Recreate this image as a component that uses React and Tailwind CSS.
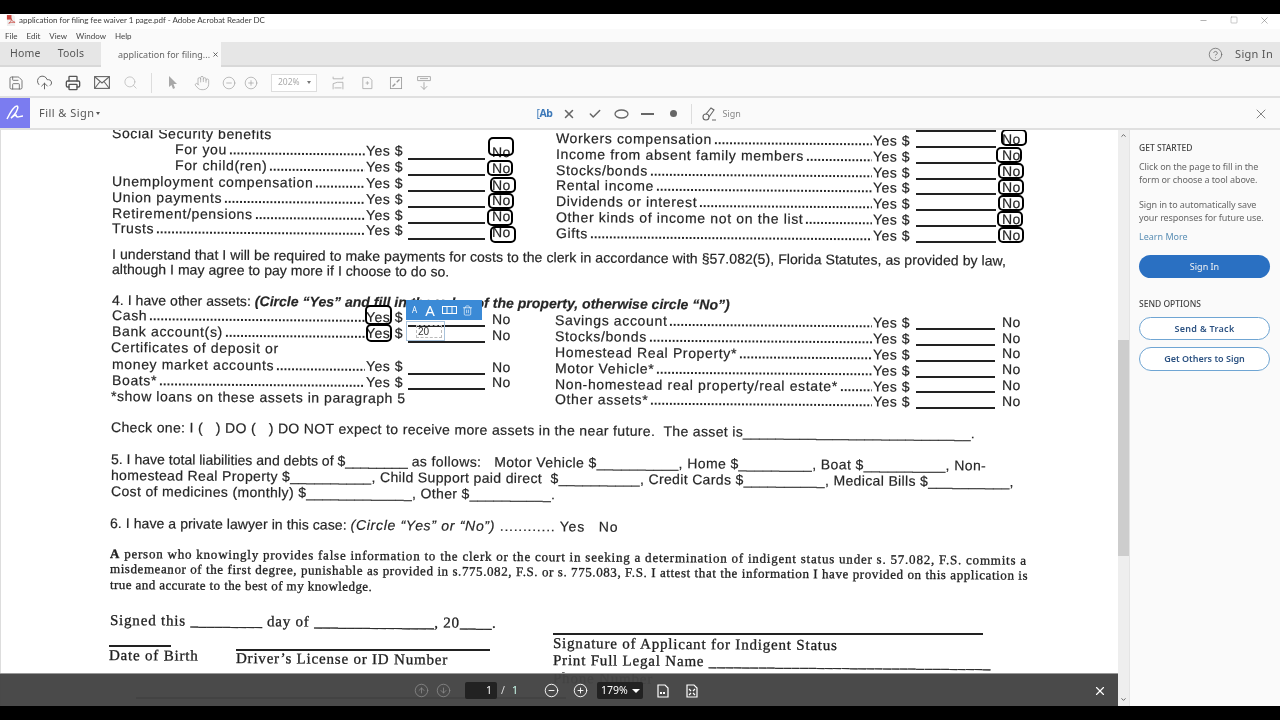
import React from "react";
import { Save, CloudUpload, Printer, Search, Hand, CircleMinus, CirclePlus, CircleHelp, ChevronUp, ChevronDown, X, Minus, Square, Check, Trash2, CircleArrowUp, CircleArrowDown } from "lucide-react";

const leftRows = [
  ["For you", 175, 141, 158, 152, 488, 137, 26, 19],
  ["For child(ren)", 175, 157, 174, 168, 487, 160, 26, 16],
  ["Unemployment compensation", 112, 173, 190, 185, 490, 177, 26, 16],
  ["Union payments", 112, 189, 206, 200, 488, 193, 26, 16],
  ["Retirement/pensions", 112, 205, 222, 216, 487, 209, 26, 17],
  ["Trusts", 112, 220, 238, 232, 490, 226, 26, 17],
];
const rightRows = [
  ["Workers compensation", 130, 146, 139, 1001, 129, 26, 17],
  ["Income from absent family members", 146, 162, 155, 996, 147, 26, 16],
  ["Stocks/bonds", 162, 178, 171, 998, 163, 26, 16],
  ["Rental income", 177, 193, 187, 998, 179, 26, 16],
  ["Dividends or interest", 193, 209, 203, 998, 195, 26, 16],
  ["Other kinds of income not on the list", 209, 225, 219, 997, 211, 26, 16],
  ["Gifts", 225, 241, 235, 998, 227, 26, 16],
];
const rightRows2 = [
  ["Savings account", 312, 328, 322],
  ["Stocks/bonds", 328, 344, 338],
  ["Homestead Real Property*", 344, 360, 353],
  ["Motor Vehicle*", 360, 376, 369],
  ["Non-homestead real property/real estate*", 376, 391, 385],
  ["Other assets*", 391, 407, 401],
];
const leftRows2 = [
  ["Cash", 307, 325, 319],
  ["Bank account(s)", 323, 341, 335],
  ["money market accounts", 356, 373, 367],
  ["Boats*", 372, 388, 382],
];

const T = ({ x, y, children, className = "" }) => (
  <div className={`absolute origin-left rotate-[0.42deg] whitespace-pre leading-[16px] ${className}`} style={{ left: x, top: y }}>{children}</div>
);

const Leader = ({ x, y, end, label }) => (
  <div className="absolute flex h-4 origin-left rotate-[0.42deg] items-center whitespace-nowrap leading-[16px]" style={{ left: x, top: y, width: end - x }}>
    <span className="tracking-[0.65px]">{label}</span>
    <div className="ml-[2px] mr-[1px] mt-[7px] h-[4px] min-w-0 flex-1 bg-[radial-gradient(circle,#222_0.8px,transparent_1.1px)] bg-[length:3.8px_4px]" />
    <span className="tracking-[0.5px]">Yes $</span>
  </div>
);

const Rule = ({ x, y, w }) => <div className="absolute h-[1.5px] bg-[#222]" style={{ left: x, top: y, width: w }} />;
const Mark = ({ x, y, w, h = 20 }) => <div className="absolute rounded-[5px] border-2 border-black" style={{ left: x, top: y, width: w, height: h }} />;

function Document() {
  return (
    <div className="relative h-full w-full overflow-hidden bg-white font-['Liberation_Sans',sans-serif] text-[14px] font-medium tracking-[0.35px] text-[#262626] shadow-[inset_1px_0_0_#ddd] blur-[0.2px] [-webkit-text-stroke:0.2px_#262626]">
      <T x={112} y={125} className="tracking-[0.6px]">Social Security benefits</T>
      {leftRows.map((r) => (
        <React.Fragment key={r[0]}>
          <Leader x={r[1]} y={r[2]} end={403} label={r[0]} />
          <Rule x={408} y={r[3]} w={77} />
          <T x={492} y={r[4] - 8}>No</T>
          <Mark x={r[5]} y={r[6]} w={r[7]} h={r[8]} />
        </React.Fragment>
      ))}
      {rightRows.map((r) => (
        <React.Fragment key={r[0]}>
          <Leader x={556} y={r[1]} end={910} label={r[0]} />
          <Rule x={916} y={r[2]} w={80} />
          <T x={1002} y={r[3] - 8}>No</T>
          <Mark x={r[4]} y={r[5]} w={r[6]} h={r[7]} />
        </React.Fragment>
      ))}
      <Rule x={916} y={130} w={80} />

      <T x={112} y={246} className="tracking-[0.08px]">I understand that I will be required to make payments for costs to the clerk in accordance with §57.082(5), Florida Statutes, as provided by law,</T>
      <T x={112} y={261} className="tracking-[0.05px]">although I may agree to pay more if I choose to do so.</T>

      <T x={112} y={292} className="tracking-[0.05px]">4. I have other assets: <b className="italic tracking-[0.03px]">(Circle “Yes” and fill in the value of the property, otherwise circle “No”)</b></T>
      {leftRows2.map((r) => (
        <React.Fragment key={r[0]}>
          <Leader x={112} y={r[1]} end={403} label={r[0]} />
          <Rule x={408} y={r[2]} w={77} />
          <T x={492} y={r[3] - 8}>No</T>
        </React.Fragment>
      ))}
      <T x={111} y={339} className="tracking-[0.65px]">Certificates of deposit or</T>
      <T x={111} y={388} className="tracking-[0.55px]">*show loans on these assets in paragraph 5</T>
      <Mark x={365} y={305} w={27} h={20} />
      <Mark x={366} y={324} w={26} h={18} />

      {rightRows2.map((r) => (
        <React.Fragment key={r[0]}>
          <Leader x={555} y={r[1]} end={910} label={r[0]} />
          <Rule x={916} y={r[2]} w={79} />
          <T x={1002} y={r[3] - 8}>No</T>
        </React.Fragment>
      ))}

      <T x={111} y={419}>Check one: I (   ) DO (   ) DO NOT expect to receive more assets in the near future.  The asset is____________________________.</T>
      <T x={111} y={451} className="tracking-[0.02px]">5. I have total liabilities and debts of $________ <span className="tracking-[0.4px]">as follows:   Motor Vehicle $__________, Home $_________, Boat $__________, Non-</span></T>
      <T x={111} y={467}>homestead Real Property $__________, Child Support paid direct  $__________, Credit Cards $__________, Medical Bills $__________,</T>
      <T x={111} y={483}>Cost of medicines (monthly) $_____________, Other $__________.</T>
      <T x={110} y={515} className="tracking-[0.08px]">6. I have a private lawyer in this case: <i className="tracking-[0.7px]">(Circle “Yes” or “No”)</i><span className="tracking-[0.75px]"> ............ Yes   No</span></T>

      <div className="font-['Liberation_Serif',serif] text-[13px] tracking-[0.58px] text-[#202020] [-webkit-text-stroke:0.3px_#202020]">
        <T x={110} y={546} className="rotate-[0.5deg] tracking-[0.78px]"><b>A</b> person who knowingly provides false information to the clerk or the court in seeking a determination of indigent status under s. 57.082, F.S. commits a</T>
        <T x={110} y={561} className="rotate-[0.5deg]">misdemeanor of the first degree, punishable as provided in s.775.082, F.S. or s. 775.083, F.S. I attest that the information I have provided on this application is</T>
        <T x={110} y={577} className="rotate-[0.5deg] tracking-[0.42px]">true and accurate to the best of my knowledge.</T>
      </div>
      <div className="font-['Liberation_Serif',serif] text-[15px] tracking-[0.8px] text-[#202020] [-webkit-text-stroke:0.3px_#202020]">
        <T x={110} y={612}>Signed this <span className="tracking-[0.5px]">_________</span> day of <span className="tracking-[0.5px]">_______________</span>, 20<span className="tracking-[0.5px]">____</span>.</T>
        <T x={109} y={647}>Date of Birth</T>
        <T x={236} y={650}>Driver’s License or ID Number</T>
        <T x={553} y={635}>Signature of Applicant for Indigent Status</T>
        <T x={553} y={652}>Print Full Legal Name __________________________________</T>
        <T x={553} y={670}>Phone Number</T>
      </div>
      <Rule x={553} y={633} w={430} />
      <Rule x={109} y={645} w={62} />
      <Rule x={236} y={649} w={254} />
      <Rule x={136} y={697} w={430} />
    </div>
  );
}

const Icon = ({ children, w = 20, h = 20, className = "" }) => (
  <svg width={w} height={h} viewBox="0 0 20 20" fill="none" stroke="currentColor" strokeWidth="1.2" className={className}>{children}</svg>
);

export default function App() {
  return (
    <div className="flex h-[720px] w-[1280px] flex-col overflow-hidden bg-black font-['Noto_Sans',sans-serif] text-[#444] blur-[0.25px]">
      <div className="h-[14px] shrink-0 bg-black" />

      <div className="flex h-[15px] shrink-0 items-start bg-white pl-[6px] pt-[1px] font-['Lato',sans-serif] text-[8px] leading-[10px]">
        <svg width="10" height="11" viewBox="0 0 11 12" className="mr-[3px]"><path d="M1 0h7l2 2v10H1z" fill="#eee" /><path d="M1 0h5v5H1z" fill="#c9443d" /><path d="M3 9c2-1 3-3 3-5 0 2 1 3 4 4-3 0-5 0-7 1z" fill="none" stroke="#c9443d" strokeWidth=".8" /></svg>
        <span className="text-[#3c3c3c]">application for filing fee waiver 1 page.pdf - Adobe Acrobat Reader DC</span>
        <div className="ml-auto flex h-[10px] items-center text-[#777]">
          <Minus size={9} className="mr-[22px]" strokeWidth={1.5} />
          <Square size={8} className="mr-[21px]" strokeWidth={1.2} />
          <X size={11} className="mr-[10px]" strokeWidth={1.2} />
        </div>
      </div>

      <div className="flex h-[13px] shrink-0 items-center gap-[9px] bg-[#fafafa] pl-[5px] font-['Lato',sans-serif] text-[8px] text-[#444]">
        <span>File</span><span>Edit</span><span>View</span><span>Window</span><span>Help</span>
      </div>

      <div className="flex h-[25px] shrink-0 items-stretch border-b-2 border-[#d8d8d8] bg-[#e6e6e6]">
        <div className="flex w-[101px] items-center gap-[17px] pl-[10px] pt-[1px] text-[10.5px] tracking-[0.2px] text-[#555]">
          <span>Home</span><span>Tools</span>
        </div>
        <div className="-mb-[2px] flex w-[120px] items-center whitespace-nowrap bg-[#fafafa] pl-[17px] text-[9px] text-[#666]">
          <span>application for filing...</span>
          <X size={7} strokeWidth={3} className="ml-[2px] text-[#555]" />
        </div>
        <div className="ml-auto flex items-center pr-[7px] pt-[1px]">
          <CircleHelp size={15} strokeWidth={1.2} className="mr-[12px] text-[#666]" />
          <span className="text-[11px] tracking-[0.3px] text-[#555]">Sign In</span>
        </div>
      </div>

      <div className="flex h-[31px] shrink-0 items-center border-b-2 border-[#e0e0e0] bg-[#fafafa] pl-[8px] pt-[2px] text-[#666]">
        <Save size={16} strokeWidth={1.3} />
        <CloudUpload size={17} strokeWidth={1.4} className="ml-[12px]" />
        <Printer size={16} strokeWidth={2} className="ml-[12px] text-[#555]" />
        <svg width="16" height="13" viewBox="0 0 16 13" className="ml-[13px]" fill="none" stroke="#666" strokeWidth="1.1"><rect x=".6" y=".6" width="14.8" height="11.8" /><path d="M1 1l7 6 7-6M1 12l5-6.5M15 12l-5-6.5" /></svg>
        <Search size={15} strokeWidth={1.3} className="ml-[13px] text-[#bbb]" />
        <div className="ml-[13px] h-[20px] w-px bg-[#ddd]" />
        <svg width="12" height="15" viewBox="0 0 12 15" className="ml-[15px]"><path d="M2 1l8 8H6.5L8 13l-2 1-1.5-4L2 12z" fill="#a8a8a8" /></svg>
        <Hand size={16} strokeWidth={1.2} className="ml-[15px] text-[#aaa]" />
        <CircleMinus size={14} strokeWidth={1.1} className="ml-[12px] text-[#999]" />
        <CirclePlus size={14} strokeWidth={1.1} className="ml-[8px] text-[#999]" />
        <div className="ml-[13px] flex h-[18px] w-[46px] items-center border border-[#ddd] bg-white pl-[6px] text-[8.5px] text-[#aaa]">
          202%
          <span className="ml-auto mr-[5px] h-0 w-0 border-x-[2.5px] border-t-[3px] border-x-transparent border-t-[#777]" />
        </div>
        <Icon w={14} h={18} className="ml-[14px] text-[#aaa]"><path d="M3 1v3h14V1M3 19v-8l6-2h8v10M5 17h10" /></Icon>
        <Icon w={14} h={16} className="ml-[15px] text-[#aaa]"><path d="M4 2h9l4 4v12H4zM8 10h5M10.5 7.5v5" /></Icon>
        <Icon w={14} h={14} className="ml-[15px] text-[#999]"><rect x="2" y="2" width="16" height="16" /><path d="M11 9l4-4M5 15l4-4" strokeWidth="2" /></Icon>
        <Icon w={16} h={16} className="ml-[13px] text-[#aaa]"><path d="M2 2h16v5H2zM5 4.5h10M10 9v9M6 14l4 4 4-4" /></Icon>
      </div>

      <div className="flex h-[32px] shrink-0 items-stretch border-b-2 border-[#e0e0e0] bg-[#fafafa]">
        <div className="flex w-[30px] items-center justify-center bg-[#7b7cf0] text-white">
          <svg width="20" height="18" viewBox="0 0 20 18" fill="none" stroke="white" strokeWidth="1.5"><path d="M2 15C5 9 9 2 12 2c2 0 0 6-3 9l-3 3c2-1 3-3 5-3 0 2 1 2 2 2s3-1 5-1" /></svg>
        </div>
        <div className="ml-[9px] flex items-center pt-[1px] text-[11px] tracking-[0.45px] text-[#555]">
          Fill &amp; Sign
          <span className="ml-[2px] h-0 w-0 border-x-[2px] border-t-[3px] border-x-transparent border-t-[#555]" />
        </div>
        <div className="ml-[436px] flex items-center pt-[1px] text-[#666]">
          <span className="w-[16px] text-[10.5px] font-bold leading-none tracking-[-0.4px] text-[#3c78b8]"><span className="font-normal">[</span>Ab</span>
          <X size={14} strokeWidth={2.6} className="ml-[10px]" />
          <Check size={14} strokeWidth={2.6} className="ml-[12px]" />
          <svg width="15" height="10" viewBox="0 0 15 10" className="ml-[12px]" fill="none" stroke="#666" strokeWidth="1.3"><ellipse cx="7.5" cy="5" rx="6.5" ry="4" /></svg>
          <div className="ml-[12px] h-[2px] w-[13px] bg-[#666]" />
          <div className="ml-[16px] h-[7px] w-[7px] rounded-full bg-[#666]" />
          <div className="ml-[14px] h-[20px] w-px bg-[#ddd]" />
          <svg width="16" height="16" viewBox="0 0 16 16" className="ml-[9px]" fill="none" stroke="#666" strokeWidth="1.1"><circle cx="5" cy="11" r="3" /><path d="M5 8l5-6 3 2-5 7M11 14h4" /></svg>
          <span className="ml-[5px] text-[9px] text-[#888]">Sign</span>
        </div>
        <X size={16} strokeWidth={1.1} className="my-auto ml-auto mr-[11px] translate-y-[1px] text-[#555]" />
      </div>

      <div className="flex min-h-0 flex-1">
        <div className="relative w-[1118px] shrink-0 overflow-hidden">
          <div className="absolute left-0 top-[-130px] h-[706px] w-[1118px]"><Document /></div>
          <div className="absolute left-[406px] top-[170px] flex h-[20px] w-[76px] items-center bg-[#3b8ad6] pl-[6px] text-white">
            <span className="text-[8px] leading-none">A</span>
            <span className="ml-[8px] text-[15px] leading-none">A</span>
            <svg width="15" height="8" viewBox="0 0 15 8" className="ml-[7px]" fill="none" stroke="white"><rect x=".5" y=".5" width="14" height="7" /><path d="M5 0v8M10 0v8" /></svg>
            <Trash2 size={11} strokeWidth={1.4} className="ml-[5px]" />
          </div>
          <div className="absolute left-[406px] top-[191px] flex h-[20px] w-[39px] items-center border border-[#a9c3dc] pl-[11px] font-['Liberation_Sans',sans-serif] text-[10px] text-[#333]">
            20
            <div className="absolute left-[9px] top-[3px] h-[13px] w-[26px] border border-dashed border-[#bbb]" />
          </div>
          <div className="absolute inset-x-0 bottom-0 flex h-[33px] items-center border-t border-[#999] bg-[#444444]/[0.97] pt-[1px] text-[#ddd]">
            <CircleArrowUp size={15} strokeWidth={1.3} className="ml-[414px] text-[#8a8a8a]" />
            <CircleArrowDown size={15} strokeWidth={1.3} className="ml-[7px] text-[#8a8a8a]" />
            <div className="ml-[14px] flex h-[17px] w-[32px] items-center justify-end rounded-[2px] bg-[#222] pr-[5px] text-[10.5px] text-white">1</div>
            <span className="ml-[4px] text-[10.5px]">/</span>
            <span className="ml-[7px] text-[10.5px] text-[#cfe]">1</span>
            <CircleMinus size={15} strokeWidth={1.5} className="ml-[26px] text-white" />
            <CirclePlus size={15} strokeWidth={1.5} className="ml-[14px] text-white" />
            <div className="ml-[9px] flex h-[17px] w-[46px] items-center rounded-[2px] bg-[#222] pl-[4px] text-[10.5px] text-white">
              179%
              <span className="ml-auto mr-[3px] h-0 w-0 border-x-[4px] border-t-[4px] border-x-transparent border-t-white" />
            </div>
            <svg width="12" height="14" viewBox="0 0 12 14" className="ml-[14px]" fill="none" stroke="white" strokeWidth="1.2"><path d="M1 1h7l3 3v9H1z" /><path d="M3 9h6" strokeWidth="2" strokeDasharray="2 1" /></svg>
            <svg width="12" height="14" viewBox="0 0 12 14" className="ml-[17px]" fill="none" stroke="white" strokeWidth="1.2"><path d="M1 1h7l3 3v9H1z" /><path d="M3 5l2 2M9 5L7 7M3 11l2-2M9 11L7 9" /></svg>
            <X size={14} strokeWidth={2} className="ml-auto mr-[11px] text-white" />
          </div>
        </div>

        <div className="flex w-[11px] shrink-0 flex-col items-center bg-[#eeeeee] text-[#555]">
          <ChevronUp size={7} strokeWidth={3} className="mt-[2px]" />
          <div className="mt-[201px] h-[216px] w-full bg-[#cdcdcd]" />
          <ChevronDown size={7} strokeWidth={3} className="mb-[3px] mt-auto" />
        </div>

        <div className="flex min-w-0 flex-1 flex-col border-l border-[#e4e4e4] bg-[#fafafa] pl-[9px] pr-[10px] pt-[13px] text-[9px]">
          <div className="text-[8.5px] font-medium leading-[10px] text-[#444]">GET STARTED</div>
          <div className="mt-[8px] whitespace-nowrap leading-[12.5px] tracking-[-0.1px] text-[#666]">Click on the page to fill in the<br />form or choose a tool above.</div>
          <div className="mt-[13px] whitespace-nowrap leading-[12.5px] tracking-[-0.1px] text-[#666]">Sign in to automatically save<br />your responses for future use.</div>
          <div className="mt-[7px] leading-[12px] text-[#5b8fb5]">Learn More</div>
          <div className="mt-[12px] flex h-[23px] items-center justify-center rounded-full bg-[#2a70c2] text-[#f2f2f2]">Sign In</div>
          <div className="mt-[21px] text-[8.5px] font-medium leading-[10px] text-[#444]">SEND OPTIONS</div>
          <div className="mt-[8px] flex h-[23px] items-center justify-center rounded-full border border-[#6fa5d3] bg-white font-semibold tracking-[0.3px] text-[#2c5282]">Send &amp; Track</div>
          <div className="mt-[7px] flex h-[24px] items-center justify-center rounded-full border border-[#6fa5d3] bg-white font-semibold text-[#2c5282]">Get Others to Sign</div>
        </div>
      </div>
      <div className="h-[14px] shrink-0 bg-black" />
    </div>
  );
}
